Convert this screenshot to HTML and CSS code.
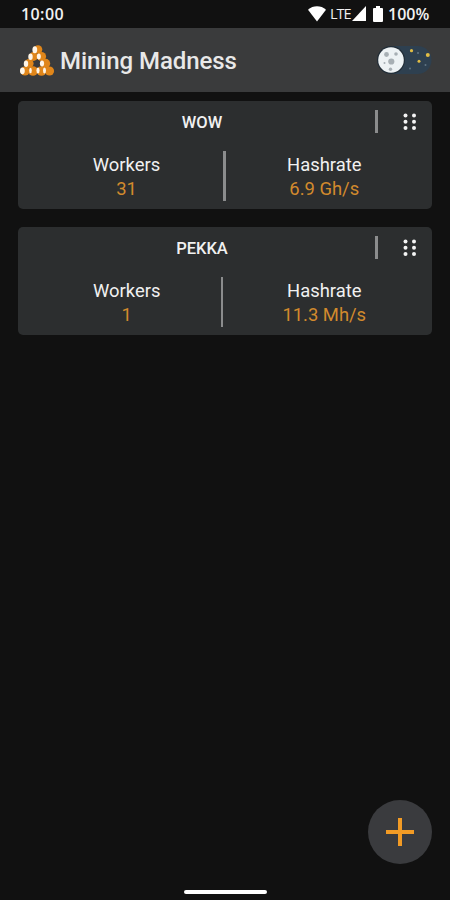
FILE: index.html
```html
<!DOCTYPE html>
<html lang="en">
<head>
<meta charset="utf-8">
<title>Mining Madness</title>
<link rel="stylesheet" href="styles.css">
</head>
<body>
<div class="app">
  <div class="status">
    <span class="time">10:00</span>
    <div class="indicators">
      <svg class="wifi" width="18" height="16" viewBox="0 0 18 16"><path d="M0 3.8C5-.8 13-.8 18 3.8L9 15.5Z"/></svg>
      <span class="lte">LTE</span>
      <svg class="signal" width="14" height="15" viewBox="0 0 14 15"><path d="M14 0V15H0Z"/></svg>
      <svg class="battery" width="10" height="16" viewBox="0 0 10 16"><path d="M3 0H7V2H9Q10 2 10 3V15Q10 16 9 16H1Q0 16 0 15V3Q0 2 1 2H3Z"/></svg>
      <span class="percent">100%</span>
    </div>
  </div>
  <header class="header">
    <svg class="logo" width="36" height="33" viewBox="0 0 36 33">
      <g fill="#e0861a">
        <circle cx="19" cy="5.5" r="4.3"/><circle cx="14.5" cy="12.5" r="4.4"/><circle cx="22.5" cy="12.5" r="4.6"/>
        <circle cx="10" cy="19.5" r="4.6"/><circle cx="26.5" cy="19.5" r="4.7"/>
        <circle cx="6" cy="27" r="4.6"/><circle cx="14" cy="27" r="4.8"/><circle cx="22.5" cy="27" r="4.8"/><circle cx="30.5" cy="27" r="4.6"/>
      </g>
      <g fill="#fff6e8">
        <ellipse cx="15.8" cy="5.8" rx="2.4" ry="3.5"/><ellipse cx="11.5" cy="12.8" rx="2.2" ry="3.2"/><ellipse cx="19.8" cy="12.5" rx="2" ry="2.9"/>
        <ellipse cx="7" cy="19.8" rx="2.2" ry="3.2"/><ellipse cx="23" cy="19.5" rx="2.1" ry="3"/>
        <ellipse cx="3.4" cy="26.8" rx="2.4" ry="3.4"/><ellipse cx="11.5" cy="26.5" rx="1.3" ry="2.7"/><ellipse cx="19" cy="26.5" rx="1.6" ry="2.9"/><ellipse cx="25.5" cy="26.5" rx="1.5" ry="2.9"/>
      </g>
    </svg>
    <h1 class="title">Mining Madness</h1>
    <svg class="toggle" width="56" height="30" viewBox="0 0 56 30">
      <rect x="1" y="1" width="53.5" height="28" rx="14" fill="#2e4050"/>
      <circle cx="14" cy="15" r="14" fill="#222d37"/>
      <circle cx="14" cy="15" r="12.8" fill="#edf2f4"/>
      <g fill="#a7afb4"><circle cx="9.5" cy="9.5" r="2.4"/><circle cx="19" cy="9" r="1.8"/><circle cx="14.3" cy="16.5" r="3.1"/><circle cx="13.5" cy="24.2" r="1.7"/><circle cx="7.5" cy="18" r="1"/></g>
      <g fill="#e1bd45"><circle cx="34.5" cy="5.7" r="1.6"/><circle cx="50.8" cy="10" r="2"/><circle cx="42" cy="16.3" r="1.5"/></g>
      <g fill="#607483"><circle cx="41" cy="8" r="1"/><circle cx="48.5" cy="20" r="1"/><circle cx="33" cy="23.5" r="1"/></g>
    </svg>
  </header>
  <main class="list">
    <section class="card">
      <div class="card-head">
        <h2 class="name">WOW</h2><i class="rule"></i>
        <svg class="grip" width="14" height="18" viewBox="0 0 14 18"><g fill="#f4f4f4"><circle cx="2.5" cy="2.5" r="2"/><circle cx="11" cy="2.5" r="2"/><circle cx="2.5" cy="8.8" r="2"/><circle cx="11" cy="8.8" r="2"/><circle cx="2.5" cy="15" r="2"/><circle cx="11" cy="15" r="2"/></g></svg>
      </div>
      <div class="stats">
        <div class="stat workers"><span class="label">Workers</span><span class="value">31</span></div>
        <i class="rule"></i>
        <div class="stat rate"><span class="label">Hashrate</span><span class="value">6.9 Gh/s</span></div>
      </div>
    </section>
    <section class="card">
      <div class="card-head">
        <h2 class="name">PEKKA</h2><i class="rule"></i>
        <svg class="grip" width="14" height="18" viewBox="0 0 14 18"><g fill="#f4f4f4"><circle cx="2.5" cy="2.5" r="2"/><circle cx="11" cy="2.5" r="2"/><circle cx="2.5" cy="8.8" r="2"/><circle cx="11" cy="8.8" r="2"/><circle cx="2.5" cy="15" r="2"/><circle cx="11" cy="15" r="2"/></g></svg>
      </div>
      <div class="stats narrow">
        <div class="stat workers"><span class="label">Workers</span><span class="value">1</span></div>
        <i class="rule"></i>
        <div class="stat rate"><span class="label">Hashrate</span><span class="value">11.3 Mh/s</span></div>
      </div>
    </section>
  </main>
  <button class="add" aria-label="Add"><svg width="28" height="28" viewBox="0 0 28 28"><path d="M14 0V28M0 14H28" stroke="#f29b25" stroke-width="4"/></svg></button>
  <div class="home"></div>
</div>
</body>
</html>
```
FILE: styles.css
```css
* { box-sizing: border-box; }
body { margin: 0; background: #111; color: #f1f1f1; font-family: Roboto, sans-serif; }
.app { height: 900px; display: flex; flex-direction: column; overflow: hidden; }
.status { height: 28px; flex: none; display: flex; justify-content: space-between; align-items: center; padding: 0 20px 1px 21px; }
.time { font: 600 16px/20px "Open Sans", sans-serif; letter-spacing: .4px; }
.indicators { display: flex; align-items: center; fill: #fff; }
.wifi { margin-right: 4px; }
.lte { font: 500 14.5px/20px "Open Sans", sans-serif; letter-spacing: -1px; width: 22px; }
.signal { margin-right: 7px; }
.battery { margin-right: 5px; }
.percent { font: 600 16px/20px "Open Sans", sans-serif; width: 42px; }
.header { height: 64px; flex: none; background: #3a3b3c; display: flex; align-items: center; padding: 2px 17px 0 19px; }
.logo { flex: none; margin-top: -2px; }
.title { margin: 0 auto 0 5px; font-size: 24px; line-height: 30px; font-weight: 500; letter-spacing: -.07px; color: #e8e8e8; white-space: nowrap; }
.toggle { flex: none; margin-top: -2px; }
.list { padding: 9px 18px; display: grid; gap: 18.4px; }
.card { height: 108px; border-radius: 5px; background: #2c2e2f; }
.card-head { height: 41px; display: grid; grid-template-columns: 357px 3px 54px; align-items: center; }
.name { margin: 2px 0 0; padding-left: 11px; text-align: center; font-size: 16.5px; line-height: 20px; font-weight: 500; }
.rule { display: block; background: #8b8c8d; }
.card-head .rule { height: 23px; width: 3px; }
.grip { margin-left: 25px; }
.stats { display: grid; grid-template-columns: 205px 2.5px 1fr; padding-top: 9px; }
.stats .rule { height: 50px; }
.stats.narrow { grid-template-columns: 202.5px 2px 1fr; }
.stat { display: flex; flex-direction: column; align-items: center; font-size: 18.4px; line-height: 24.5px; padding-top: 1.5px; }
.workers { padding-left: 12px; }
.narrow .workers { padding-left: 15px; }
.rate { padding-right: 9px; }
.narrow .rate { padding-right: 6px; }
.value { color: #d28a2d; }
.add { width: 64px; height: 64px; border: 0; border-radius: 50%; background: #3a3b3e; padding: 0; margin: auto 18px 26px auto; display: grid; place-items: center; flex: none; }
.home { width: 83px; height: 4px; border-radius: 2px; background: #fff; margin: 0 auto 6px; flex: none; }
```
